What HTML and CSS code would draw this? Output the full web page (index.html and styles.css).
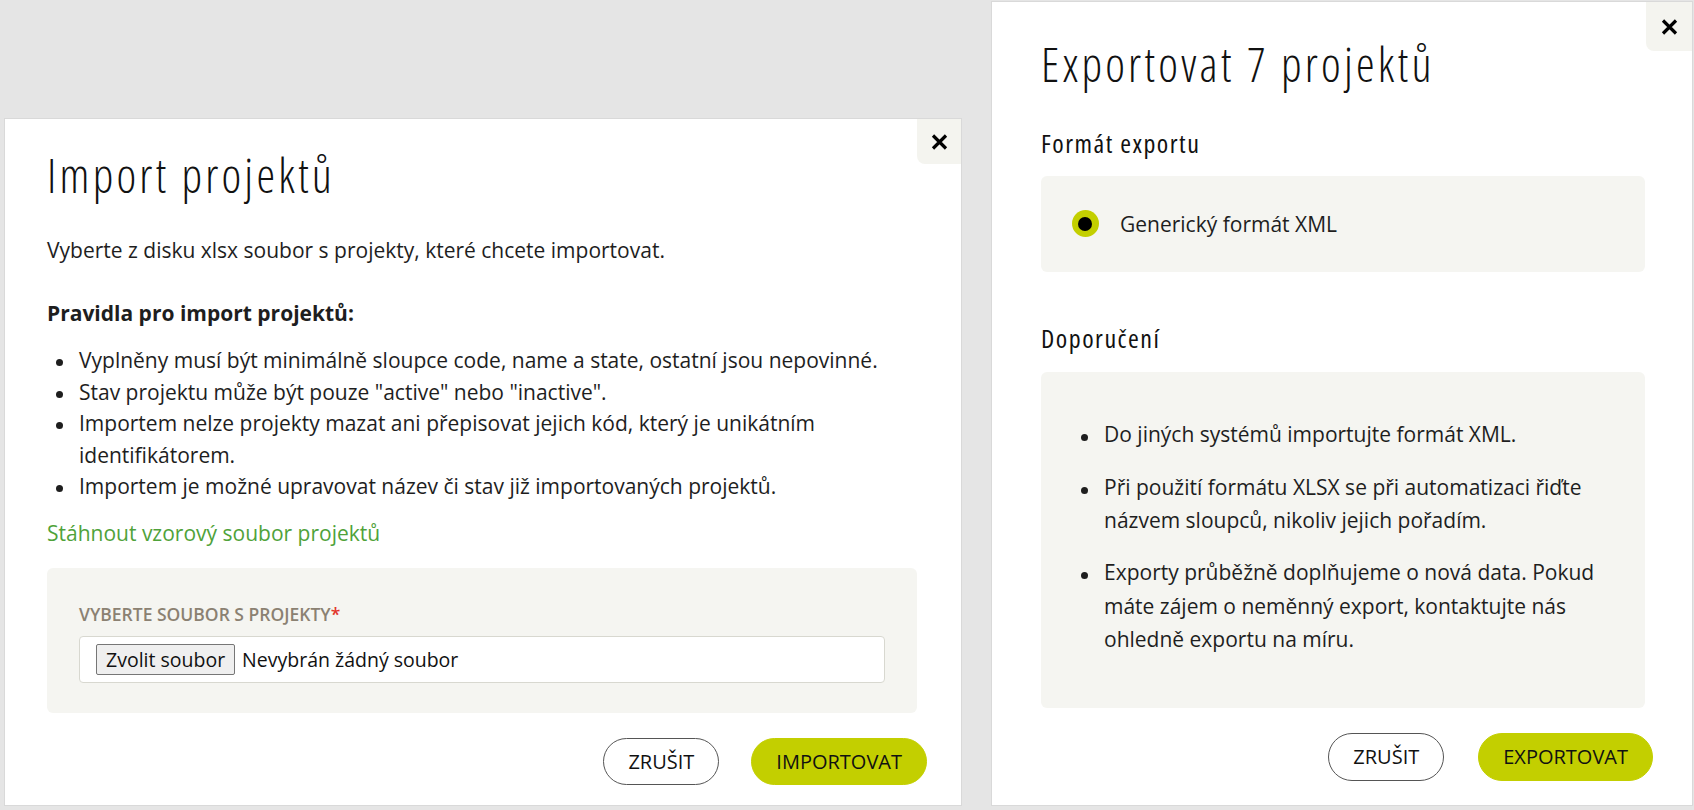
FILE: index.html
```html
<!DOCTYPE html>
<html lang="cs">
<head>
<meta charset="utf-8">
<title>Import / Export projektů</title>
<link rel="stylesheet" href="styles.css">
</head>
<body>
<div class="page">
  <section class="modal modal-import">
    <button class="close" type="button" aria-label="Zavřít">
      <svg width="17" height="16" viewBox="0 0 17 16"><path d="M2 1.5 L15 14.5 M15 1.5 L2 14.5" stroke="#000" stroke-width="3.2" fill="none"/></svg>
    </button>
    <h1 class="title">Import projektů</h1>
    <p class="text intro">Vyberte z disku xlsx soubor s projekty, které chcete importovat.</p>
    <p class="text rules-title">Pravidla pro import projektů:</p>
    <ul class="list rules">
      <li>Vyplněny musí být minimálně sloupce code, name a state, ostatní jsou nepovinné.</li>
      <li>Stav projektu může být pouze "active" nebo "inactive".</li>
      <li>Importem nelze projekty mazat ani přepisovat jejich kód, který je unikátním identifikátorem.</li>
      <li>Importem je možné upravovat název či stav již importovaných projektů.</li>
    </ul>
    <a class="text link" href="#">Stáhnout vzorový soubor projektů</a>
    <div class="panel file-panel">
      <div class="field-label">Vyberte soubor s projekty<span class="req">*</span></div>
      <div class="file-input">
        <span class="file-btn">Zvolit soubor</span>
        <span class="file-name">Nevybrán žádný soubor</span>
      </div>
    </div>
    <div class="actions actions-import">
      <button class="btn btn-outline" type="button">Zrušit</button>
      <button class="btn btn-primary" type="button">Importovat</button>
    </div>
  </section>

  <section class="modal modal-export">
    <button class="close close-export" type="button" aria-label="Zavřít">
      <svg width="17" height="16" viewBox="0 0 17 16"><path d="M2 1.5 L15 14.5 M15 1.5 L2 14.5" stroke="#000" stroke-width="3.2" fill="none"/></svg>
    </button>
    <h1 class="title">Exportovat 7 projektů</h1>
    <h2 class="subtitle sub-format">Formát exportu</h2>
    <div class="panel radio-panel">
      <span class="radio"><span class="radio-dot"></span></span>
      <span class="radio-label">Generický formát XML</span>
    </div>
    <h2 class="subtitle sub-rec">Doporučení</h2>
    <div class="panel rec-panel">
      <ul class="list recs">
        <li>Do jiných systémů importujte formát XML.</li>
        <li>Při použití formátu XLSX se při automatizaci řiďte názvem sloupců, nikoliv jejich pořadím.</li>
        <li>Exporty průběžně doplňujeme o nová data. Pokud máte zájem o neměnný export, kontaktujte nás ohledně exportu na míru.</li>
      </ul>
    </div>
    <div class="actions actions-export">
      <button class="btn btn-outline btn-tall" type="button">Zrušit</button>
      <button class="btn btn-primary btn-tall" type="button">Exportovat</button>
    </div>
  </section>
</div>
</body>
</html>
```

FILE: styles.css
```css
* { box-sizing: border-box; }

html, body {
  margin: 0;
  padding: 0;
}

body {
  background: #e5e5e5;
  font-family: "Open Sans", "Noto Sans", sans-serif;
  color: #1e1e1e;
}

.page {
  display: flex;
  align-items: flex-end;
  gap: 29px;
  width: 1694px;
  height: 810px;
  padding: 1px 1px 4px 4px;
}

.modal {
  position: relative;
  background: #fff;
  border: 1px solid #d9d9d9;
  display: flex;
  flex-direction: column;
  align-items: stretch;
}

.modal-import {
  width: 958px;
  height: 688px;
  padding: 28px 43px 0 42px;
}

.modal-export {
  width: 702px;
  height: 805px;
  padding: 34px 47px 0 49px;
}

.close {
  position: absolute;
  top: 0;
  right: 0;
  width: 44px;
  height: 45px;
  border: none;
  padding: 0;
  background: #f4f4ef;
  border-bottom-left-radius: 8px;
  display: flex;
  align-items: center;
  justify-content: center;
  cursor: pointer;
}

.close-export {
  width: 46px;
  height: 49px;
}

.title {
  margin: 0;
  font-family: "Open Sans", sans-serif;
  font-stretch: 75%;
  font-weight: 350;
  font-size: 47px;
  line-height: 56px;
  letter-spacing: 3.2px;
  color: #111;
}

.subtitle {
  margin: 0;
  font-family: "Open Sans", sans-serif;
  font-stretch: 75%;
  font-weight: 400;
  font-size: 26px;
  line-height: 32px;
  letter-spacing: 1.5px;
  color: #111;
}

.text {
  font-size: 21px;
  line-height: 31.5px;
  margin: 0;
}

.intro { margin-top: 32px; }

.rules-title {
  margin-top: 31.5px;
  font-weight: 700;
}

.list {
  list-style: none;
  margin: 0;
  padding: 0;
}

.list li {
  display: flex;
  font-size: 21px;
}

.list li::before {
  content: "";
  flex: none;
  width: 7px;
  height: 7px;
  border-radius: 50%;
  background: #1e1e1e;
}

.rules {
  margin-top: 15.5px;
}

.rules li {
  line-height: 31.5px;
}

.rules li::before {
  margin: 14px 16.5px 0 8.5px;
}

.link {
  display: block;
  margin-top: 15.5px;
  color: #4fa23a;
  text-decoration: none;
}

.panel {
  background: #f5f5f1;
  border-radius: 6px;
}

.file-panel {
  margin-top: 18.5px;
  margin-right: 1px;
  padding: 33.5px 32px 30px 32px;
}

.field-label {
  font-size: 17.5px;
  line-height: 24px;
  font-weight: 600;
  text-transform: uppercase;
  color: #8b8172;
  margin-bottom: 10px;
}

.req { color: #e2352b; }

.file-input {
  height: 47px;
  background: #fff;
  border: 1px solid #d8d8d0;
  border-radius: 4px;
  display: flex;
  align-items: center;
  padding-left: 16px;
  gap: 7px;
}

.file-btn {
  height: 31px;
  padding: 0 9px;
  display: flex;
  align-items: center;
  font-size: 19.5px;
  color: #111;
  background: #efefef;
  border: 1px solid #767676;
  border-radius: 2px;
}

.file-name {
  font-size: 19.5px;
  color: #111;
}

.actions {
  display: flex;
  justify-content: flex-end;
  margin-top: 25px;
}

.actions-import {
  gap: 32px;
  margin-right: -9px;
}

.actions-export {
  gap: 34px;
  margin-right: -8px;
}

.btn {
  height: 47px;
  padding: 0 24px;
  border-radius: 24px;
  font-family: "Open Sans", sans-serif;
  font-size: 20px;
  text-transform: uppercase;
  color: #111;
  cursor: pointer;
}

.btn-tall { height: 48px; }

.btn-outline {
  background: #fff;
  border: 1.5px solid #555;
}

.btn-primary {
  background: #c3cf00;
  border: 1px solid #c3cf00;
}

.sub-format { margin-top: 34.6px; }

.radio-panel {
  margin-top: 17.4px;
  height: 96px;
  display: flex;
  align-items: center;
  padding-left: 30.5px;
  gap: 21.5px;
}

.radio {
  width: 27px;
  height: 27px;
  border-radius: 50%;
  background: #c3cf00;
  display: flex;
  align-items: center;
  justify-content: center;
}

.radio-dot {
  width: 14px;
  height: 14px;
  border-radius: 50%;
  background: #000;
}

.radio-label {
  font-size: 21px;
  color: #1e1e1e;
}

.sub-rec { margin-top: 49.6px; }

.rec-panel {
  margin-top: 18.4px;
  padding: 46.5px 30px 50.7px 39.5px;
}

.recs li {
  line-height: 33.6px;
}

.recs li + li {
  margin-top: 18.5px;
}

.recs li::before {
  margin: 16px 16.5px 0 0;
}
```
